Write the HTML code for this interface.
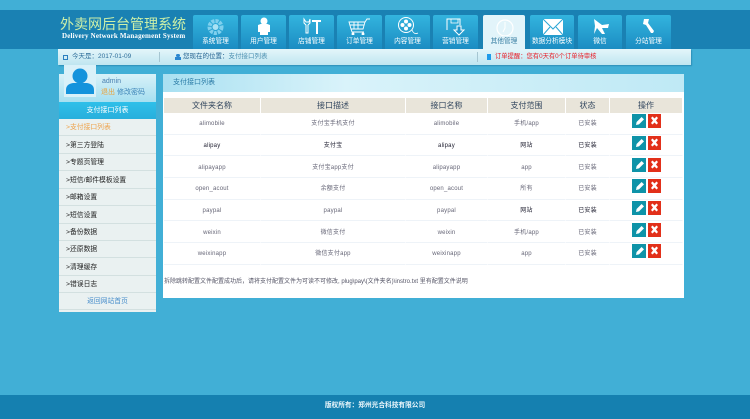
<!DOCTYPE html>
<html lang="zh"><head><meta charset="utf-8"><title>外卖网后台管理系统</title>
<style>
*{box-sizing:border-box;margin:0;padding:0}
html,body{width:750px;height:419px;overflow:hidden}
body{position:relative;background:#41afd6;font-family:"Liberation Sans","Noto Sans CJK SC",sans-serif;font-size:7px;color:#444;filter:blur(.3px)}
.a{position:absolute;white-space:nowrap}
.hd{left:0;top:10px;width:750px;height:39px;background:#1a81b3}
.ft{left:0;top:395px;width:750px;height:24px;background:#1580b0;color:#eaf6fb;text-align:center;font-size:6.7px;font-weight:bold;line-height:21px}
.tab{top:15px;height:34px;width:45px;background:linear-gradient(#33b4de,#1b8cc2);border-radius:2px 2px 0 0;color:#fff;text-align:center;font-size:6.7px}
.tab span{position:absolute;left:0;right:0;top:21.5px;line-height:9px}
.tab svg{position:absolute;left:0;top:0}
.tab.on{background:#e2f4fa;color:#3a7fa3}
.crumb{left:58px;top:49px;width:633px;height:16px;background:linear-gradient(#e4f5fa,#bfe5f0);box-shadow:1px 1px 1px #2c8fb8;line-height:16px;font-size:6.5px;color:#2e6e9a}
.side{left:59px;top:74px;width:97px;height:238px;background:#eaf1f1}
.utop{left:0;top:0;width:97px;height:28px;background:linear-gradient(#d8f1f8,#a6dff0)}
.sh{left:0;top:28px;width:97px;height:17px;background:linear-gradient(#2fbfe9,#27afdc);color:#fff;text-align:center;line-height:17px;font-size:7px}
.mi{left:0;width:97px;height:17.4px;border-bottom:1px solid #d3e0e0;line-height:12px;padding:3px 0 0 7px;font-size:6.8px;color:#222}
.main{left:163px;top:74px;width:521px;height:224px;background:#fff}
.mt{left:0;top:0;width:521px;height:18px;background:linear-gradient(90deg,#a9e0f1,#d9f3fa 35%,#bfe9f5);color:#2a7ba6;line-height:17px;padding-left:10px;font-size:7px}
table{position:absolute;left:1px;top:24px;width:519px;border-collapse:separate;border-spacing:0;table-layout:fixed}
th{height:15px;background:#e9e5da;color:#33475f;font-weight:normal;font-size:8px;line-height:9px;border-right:1px solid #fff}
td{height:21.7px;padding-top:3px;text-align:center;color:#667;font-size:6px;letter-spacing:.2px;line-height:9px;border-bottom:1px solid #eef3f8;border-right:1px solid #fff}
.dk td{color:#223}
.note{left:1px;top:204px;font-size:6px;line-height:9px;color:#556}
</style></head><body>
<div class="a hd"></div>
<div class="a" style="left:60px;top:15.5px;font-size:14px;color:#cdf0a8;line-height:17px">外卖网后台管理系统</div>
<div class="a" style="left:62px;top:32px;font:bold 7px/9px 'Liberation Serif',serif;color:#fff;letter-spacing:.18px">Delivery Network Management System</div>

<div class="a tab" style="left:193px"><svg width="45" height="20"><circle cx="22.5" cy="12" r="6" fill="none" stroke="#7fd0ee" stroke-width="4" stroke-dasharray="3 1"/><circle cx="22.5" cy="12" r="3" fill="#a9e2f4"/></svg><span>系统管理</span></div>
<div class="a tab" style="left:241px"><svg width="45" height="20"><circle cx="23" cy="6" r="3.5" fill="#fff"/><path d="M17 10q6-3 12 0v7h-2v3h-8v-3h-2z" fill="#fff"/></svg><span>用户管理</span></div>
<div class="a tab" style="left:289px"><svg width="45" height="20" fill="none" stroke="#fff"><path d="M15 4v4l2 2v8h2v-8l2-2V4l-1 3h-3z" stroke-width="1"/><path d="M23 6h9M28 6v13" stroke-width="2"/></svg><span>店铺管理</span></div>
<div class="a tab" style="left:337px"><svg width="45" height="20" fill="none" stroke="#fff" stroke-width=".9"><path d="M12 7h16l-2 7H14zM17 7v7M21 7v7M13 10h14M28 7l2-3h3M14 14l1 3h12"/><circle cx="16" cy="19" r="1" fill="#fff"/><circle cx="26" cy="19" r="1" fill="#fff"/></svg><span>订单管理</span></div>
<div class="a tab" style="left:385px"><svg width="45" height="21" fill="none" stroke="#fff"><circle cx="21" cy="10" r="7.5"/><circle cx="21" cy="6.5" r="2" fill="#fff" stroke="none"/><circle cx="21" cy="13.5" r="2" fill="#fff" stroke="none"/><circle cx="17.5" cy="10" r="2" fill="#fff" stroke="none"/><circle cx="24.5" cy="10" r="2" fill="#fff" stroke="none"/><path d="M27 15q2 5 6 3" stroke-width=".8"/></svg><span>内容管理</span></div>
<div class="a tab" style="left:433px"><svg width="45" height="21" fill="none" stroke="#fff"><path d="M14 15V4h13v6"/><path d="M18 4v4h7V4" stroke-width=".8"/><path d="M24 11h4v4h3l-5 5-5-5h3z" fill="#1e93c8"/></svg><span>营销管理</span></div>
<div class="a tab on" style="left:483px;width:42px"><svg width="42" height="21" fill="none" stroke="#fff"><circle cx="22" cy="13" r="8" stroke-width="1.2"/><path d="M22 7v6l-2 4"/></svg><span>其他管理</span></div>
<div class="a tab" style="left:530px;width:44px"><svg width="44" height="21"><rect x="13" y="4" width="20" height="16" fill="#fff"/><path d="M13 4l10 10L33 4M13 20l7-8M33 20l-7-8" fill="none" stroke="#2aa5d4"/></svg><span>数据分析模块</span></div>
<div class="a tab" style="left:578px;width:44px"><svg width="44" height="20"><path d="M16 4L24 10 31 9 30 13 24 13 27 19 24 19 19 13 16 19 17 11z" fill="#fff"/></svg><span>微信</span></div>
<div class="a tab" style="left:626px"><svg width="45" height="20"><path d="M18 4h5l-1 4 6 8-1 2h-2l-5-8-3-1z" fill="#fff"/></svg><span>分站管理</span></div>

<div class="a crumb">
<span class="a" style="left:5px;top:6px;width:5px;height:5px;border:1px solid #2b7fc0"></span>
<span class="a" style="left:14px">今天是：2017-01-09</span>
<span class="a" style="left:101px;top:3px;width:1px;height:10px;background:#a6c6d2"></span>
<span class="a" style="left:118px;top:5px;width:4px;height:3px;border-radius:2px;background:#2b87d0"></span>
<span class="a" style="left:117px;top:8px;width:6px;height:3px;background:#2b87d0"></span>
<span class="a" style="left:125px;color:#1f5f8e">您现在的位置：<span style="color:#4a8fb0">支付接口列表</span></span>
<span class="a" style="left:419px;top:3px;width:1px;height:10px;background:#a6c6d2"></span>
<span class="a" style="left:429px;top:5px;width:4px;height:6px;background:#1f9bea"></span>
<span class="a" style="left:437px;color:#e8202a;font-size:6.3px">订单提醒：您有0天有0个订单待审核</span>
</div>

<div class="a side">
<div class="a utop"></div>
<div class="a" style="left:5px;top:-9px;width:32px;height:32px;background:#d9f1f9"><svg width="32" height="32"><circle cx="16" cy="11" r="7.5" fill="#1493dc"/><path d="M2 29v-4q0-6 7-7h14q7 1 7 7v4z" fill="#1493dc"/></svg></div>
<div class="a" style="left:43px;top:4px;color:#4a80b0">admin</div>
<div class="a" style="left:42px;top:13px"><span style="color:#e8a23c">退出</span> <span style="color:#3f85b8">修改密码</span></div>
<div class="a sh">支付接口列表</div>
<div class="a mi" style="top:45px;color:#eea24a">&gt;支付接口列表</div>
<div class="a mi" style="top:63px">&gt;第三方登陆</div>
<div class="a mi" style="top:80px">&gt;专题页管理</div>
<div class="a mi" style="top:98px">&gt;短信/邮件模板设置</div>
<div class="a mi" style="top:115px">&gt;邮箱设置</div>
<div class="a mi" style="top:133px">&gt;短信设置</div>
<div class="a mi" style="top:150px">&gt;备份数据</div>
<div class="a mi" style="top:167px">&gt;还原数据</div>
<div class="a mi" style="top:185px">&gt;清理缓存</div>
<div class="a mi" style="top:202px">&gt;错误日志</div>
<div class="a mi" style="top:219px;padding:3px 0 0;text-align:center;color:#4a8fcc">返回网站首页</div>
</div>

<div class="a main">
<div class="a mt">支付接口列表</div>
<table><colgroup><col style="width:97px"><col style="width:145px"><col style="width:82px"><col style="width:78px"><col style="width:44px"><col style="width:73px"></colgroup>
<tr><th>文件夹名称</th><th>接口描述</th><th>接口名称</th><th>支付范围</th><th>状态</th><th>操作</th></tr>
<tr><td>alimobile</td><td>支付宝手机支付</td><td>alimobile</td><td>手机/app</td><td>已安装</td><td></td></tr>
<tr class="dk"><td>alipay</td><td>支付宝</td><td>alipay</td><td>网站</td><td>已安装</td><td></td></tr>
<tr><td>alipayapp</td><td>支付宝app支付</td><td>alipayapp</td><td>app</td><td>已安装</td><td></td></tr>
<tr><td>open_acout</td><td>余额支付</td><td>open_acout</td><td>所有</td><td>已安装</td><td></td></tr>
<tr><td>paypal</td><td>paypal</td><td>paypal</td><td style="color:#223">网站</td><td style="color:#223">已安装</td><td></td></tr>
<tr><td>weixin</td><td>微信支付</td><td>weixin</td><td>手机/app</td><td>已安装</td><td></td></tr>
<tr><td>weixinapp</td><td>微信支付app</td><td>weixinapp</td><td>app</td><td>已安装</td><td></td></tr>
</table>
<svg class="a" style="left:0;top:0" width="521" height="224">
<defs><g id="btns"><rect x="469" width="14" height="14" fill="#0e93a8"/><path d="M473 11l.6-3 5-5 2.4 2.4-5 5z" fill="#fff"/><rect x="485" width="13" height="14" fill="#e2301a"/><path d="M488 4l1.5-1.5 2 2 2-2L495 4l-2 2.5 2 2.5-1.5 1.5-2-2-2 2L488 9l2-2.5z" fill="#fff"/></g></defs>
<use href="#btns" y="40"/><use href="#btns" y="62"/><use href="#btns" y="84"/><use href="#btns" y="105"/><use href="#btns" y="127"/><use href="#btns" y="149"/><use href="#btns" y="170"/>
</svg>
<div class="a note">拆除跳转配置文件配置成功后，请将支付配置文件为可读不可修改, plug\pay\(文件夹名)\instro.txt 里有配置文件说明</div>
</div>
<div class="a ft">版权所有：郑州光合科技有限公司</div>
</body></html>
